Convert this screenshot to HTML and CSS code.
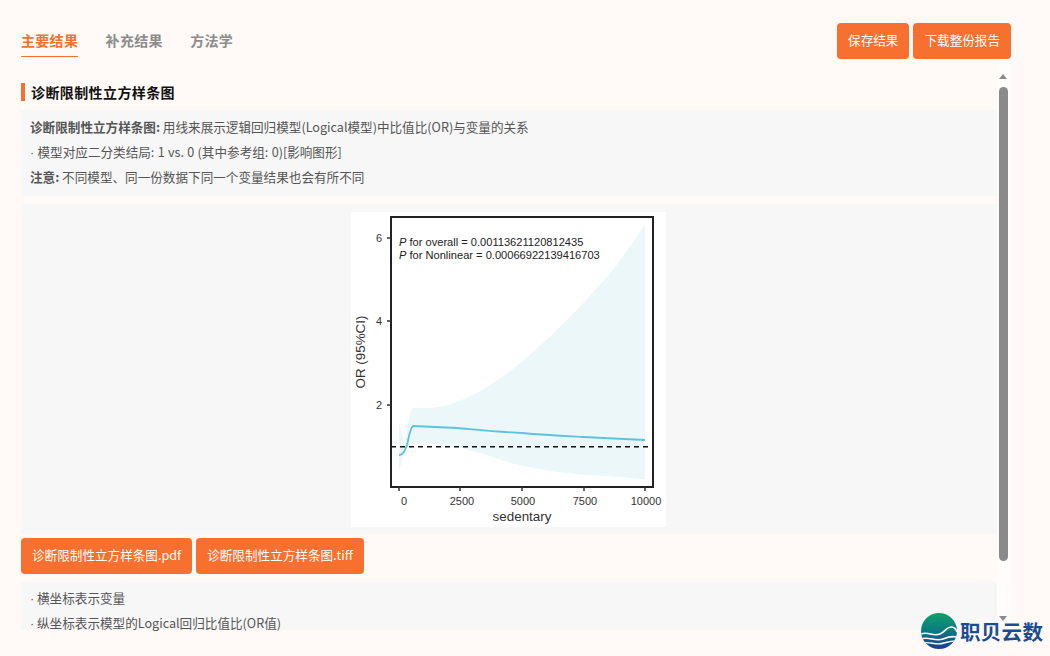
FILE: index.html
```html
<!DOCTYPE html>
<html lang="zh">
<head>
<meta charset="utf-8">
<title>诊断限制性立方样条图</title>
<link rel="stylesheet" href="styles.css">
</head>
<body>
<div class="page">
  <header class="topbar">
    <nav class="tabs">
      <a class="tab active">主要结果</a>
      <a class="tab">补充结果</a>
      <a class="tab">方法学</a>
    </nav>
    <div class="actions">
      <button class="btn">保存结果</button>
      <button class="btn">下载整份报告</button>
    </div>
  </header>
  <div class="body">
    <main class="content">
      <h2 class="title">诊断限制性立方样条图</h2>
      <section class="note">
        <p><b>诊断限制性立方样条图:</b> 用线来展示逻辑回归模型(Logical模型)中比值比(OR)与变量的关系</p>
        <p class="spaced"><span class="dot">·</span> 模型对应二分类结局: 1 vs. 0 (其中参考组: 0)[影响图形]</p>
        <p><b>注意:</b> 不同模型、同一份数据下同一个变量结果也会有所不同</p>
      </section>
      <figure class="figure">
        <svg class="plot" width="315" height="315" viewBox="351 212 315 315" xmlns="http://www.w3.org/2000/svg">
          <rect x="351" y="212" width="315" height="315" fill="#fff"/>
          <path class="band" d="M399 422 L405 447 C407 430 409 411 413 408 L430 408 C442 407 450 405 457 402 C470 397 480 391 490 385 C530 360 573 315 607 277 C620 262 632 243 645 225 L645 479 C630 478 620 477 607 476 C590 475 575 474 557 472 C540 469 525 467 507 462 C490 456 475 451 457 447 C440 444 425 443 413 442 L405 450 L399 471 Z"/>
          <path class="curve" d="M399 455 C401 455 402 455 403 453 C405 451 406 448 407 445 C409 437 410 428 413 426 L457 428 C480 430 500 432 522 433 C545 435 565 436 583 437 C605 438 625 439 645 440"/>
          <line class="ref" x1="391" y1="446.700" x2="653" y2="446.700"/>
          <rect class="frame" x="391" y="217" width="262" height="270"/>
          <path class="ticks" d="M387 238H391M387 321H391M387 405H391M399 487V491M460 487V491M522 487V491M584 487V491M645 487V491"/>
          <text class="axis-num" x="382" y="242" text-anchor="end">6</text>
          <text class="axis-num" x="382" y="325" text-anchor="end">4</text>
          <text class="axis-num" x="382" y="409" text-anchor="end">2</text>
          <text class="axis-num" x="404" y="505" text-anchor="middle">0</text>
          <text class="axis-num" x="462" y="505" text-anchor="middle">2500</text>
          <text class="axis-num" x="523" y="505" text-anchor="middle">5000</text>
          <text class="axis-num" x="585" y="505" text-anchor="middle">7500</text>
          <text class="axis-num" x="646" y="505" text-anchor="middle">10000</text>
          <text class="axis-label" x="522" y="521" text-anchor="middle">sedentary</text>
          <text class="axis-label" transform="translate(365 352) rotate(-90)" text-anchor="middle">OR (95%CI)</text>
          <text class="pval" x="399" y="246"><tspan class="italic">P</tspan> for overall = 0.00113621120812435</text>
          <text class="pval" x="399" y="259"><tspan class="italic">P</tspan> for Nonlinear = 0.00066922139416703</text>
        </svg>
      </figure>
      <div class="downloads">
        <button class="btn">诊断限制性立方样条图.pdf</button>
        <button class="btn">诊断限制性立方样条图.tiff</button>
      </div>
      <section class="note compact">
        <p><span class="dot">·</span> 横坐标表示变量</p>
        <p><span class="dot">·</span> 纵坐标表示模型的Logical回归比值比(OR值)</p>
      </section>
    </main>
    <aside class="scrollbar">
      <span class="arrow up"></span>
      <span class="thumb"></span>
      <span class="arrow down"></span>
    </aside>
  </div>
</div>
<div class="brand">
  <svg class="brand-mark" width="38" height="38" viewBox="0 0 38 38" xmlns="http://www.w3.org/2000/svg">
    <defs>
      <linearGradient id="globe" x1="0" y1="0" x2="0" y2="1">
        <stop offset="0" stop-color="#12a06a"/>
        <stop offset="0.5" stop-color="#0b7a80"/>
        <stop offset="1" stop-color="#173d92"/>
      </linearGradient>
      <clipPath id="disc"><circle cx="19" cy="19" r="18"/></clipPath>
    </defs>
    <circle cx="19" cy="19" r="18" fill="url(#globe)"/>
    <g clip-path="url(#disc)" fill="none" stroke="#fff">
      <path stroke-width="1.600" d="M1 22C8 19 13 25 20 22C25 20 26 15 31 15C34 15 36 17 37 20"/>
      <path stroke-width="1.600" d="M1 27C9 24 15 30 23 27C28 25 32 24 37 25"/>
      <path stroke-width="1.400" d="M3 31C10 29 16 34 24 31C28 30 31 29 35 29"/>
    </g>
  </svg>
  <span class="brand-name">职贝云数</span>
</div>
</body>
</html>
```

FILE: styles.css
```css
* { box-sizing: border-box; }
html, body { margin: 0; height: 656px; overflow: hidden; }
body {
  position: relative;
  background: #fffaf7;
  font-family: "Noto Sans CJK SC", "Noto Sans", sans-serif;
  font-size: 12.600px;
  color: #555;
}
.page { display: flex; flex-direction: column; height: 630px; padding: 23px 39px 0 21px; }
.topbar { display: flex; justify-content: space-between; align-items: flex-start; height: 43px; flex: none; }
.tabs { display: flex; gap: 27.400px; }
.tab {
  height: 34px;
  line-height: 34px;
  font-size: 14px;
  font-weight: 700;
  color: #8c8c8c;
  letter-spacing: .3px;
}
.tab.active { color: #f7702f; border-bottom: 1px solid #f7702f; }
.actions { display: flex; gap: 4px; }
.btn {
  height: 36px;
  padding: 0 11px 4px;
  border: 0;
  border-radius: 4px;
  background: #f7702f;
  color: #fff;
  font: 12.600px "Noto Sans CJK SC", "Noto Sans", sans-serif;
}
.body { display: flex; flex: 1; min-height: 0; }
.content { flex: 1; min-width: 0; padding-top: 17px; }
.title {
  margin: 0 0 9px;
  height: 18px;
  padding-left: 6px;
  border-left: 4px solid #f7702f;
  font-size: 14px;
  line-height: 18px;
  font-weight: 700;
  color: #111;
  letter-spacing: .4px;
}
.note { background: #f7f7f7; padding: 4px 9px 7px; }
.note p { margin: 0; height: 25px; line-height: 25px; white-space: nowrap; }
.note.compact { height: 48px; padding: 9px 9px 0; }
.note.compact p { height: 14px; line-height: 14px; margin-bottom: 11px; }
.note .spaced { word-spacing: .5px; }
.note b { font-weight: 700; }
.dot { font-family: "Liberation Sans", sans-serif; }
.figure { margin: 8px 0 4px; background: #f7f7f7; padding: 8px 1px 7px 0; display: flex; justify-content: center; }
.plot { display: block; }
.band { fill: #ebf7f9; }
.curve { fill: none; stroke: #5cc3dc; stroke-width: 1.800; }
.ref { stroke: #111; stroke-width: 1.500; stroke-dasharray: 5 4; }
.frame { fill: none; stroke: #222; stroke-width: 2; }
.ticks { fill: none; stroke: #333; stroke-width: 1.500; }
.axis-num { font: 11px "Liberation Sans", sans-serif; fill: #333; }
.axis-label { font: 13.400px "Liberation Sans", sans-serif; fill: #333; }
.pval { font: 11.100px "Liberation Sans", sans-serif; fill: #222; }
.italic { font-style: italic; }
.downloads { display: flex; gap: 4px; margin-bottom: 8px; }
.scrollbar {
  flex: none;
  width: 14px;
  margin-top: -3px;
  padding-left: 2px;
  background: #fffdfc;
  display: flex;
  flex-direction: column;
  align-items: flex-start;
}
.thumb { width: 9px; height: 474px; border-radius: 5px; background: #8a8a8a; margin: 8px 0 55px; }
.arrow { width: 0; height: 0; border-left: 4.500px solid transparent; border-right: 4.500px solid transparent; }
.arrow.up { margin-top: 11px; border-bottom: 5px solid #8a8a8a; }
.arrow.down { border-top: 5px solid #8a8a8a; }
.brand { position: absolute; left: 920px; top: 612px; display: flex; align-items: center; gap: 2px; }
.brand-mark { display: block; }
.brand-name { font-size: 20.500px; line-height: 38px; font-weight: 700; color: #1b4c92; letter-spacing: .3px; }
```
